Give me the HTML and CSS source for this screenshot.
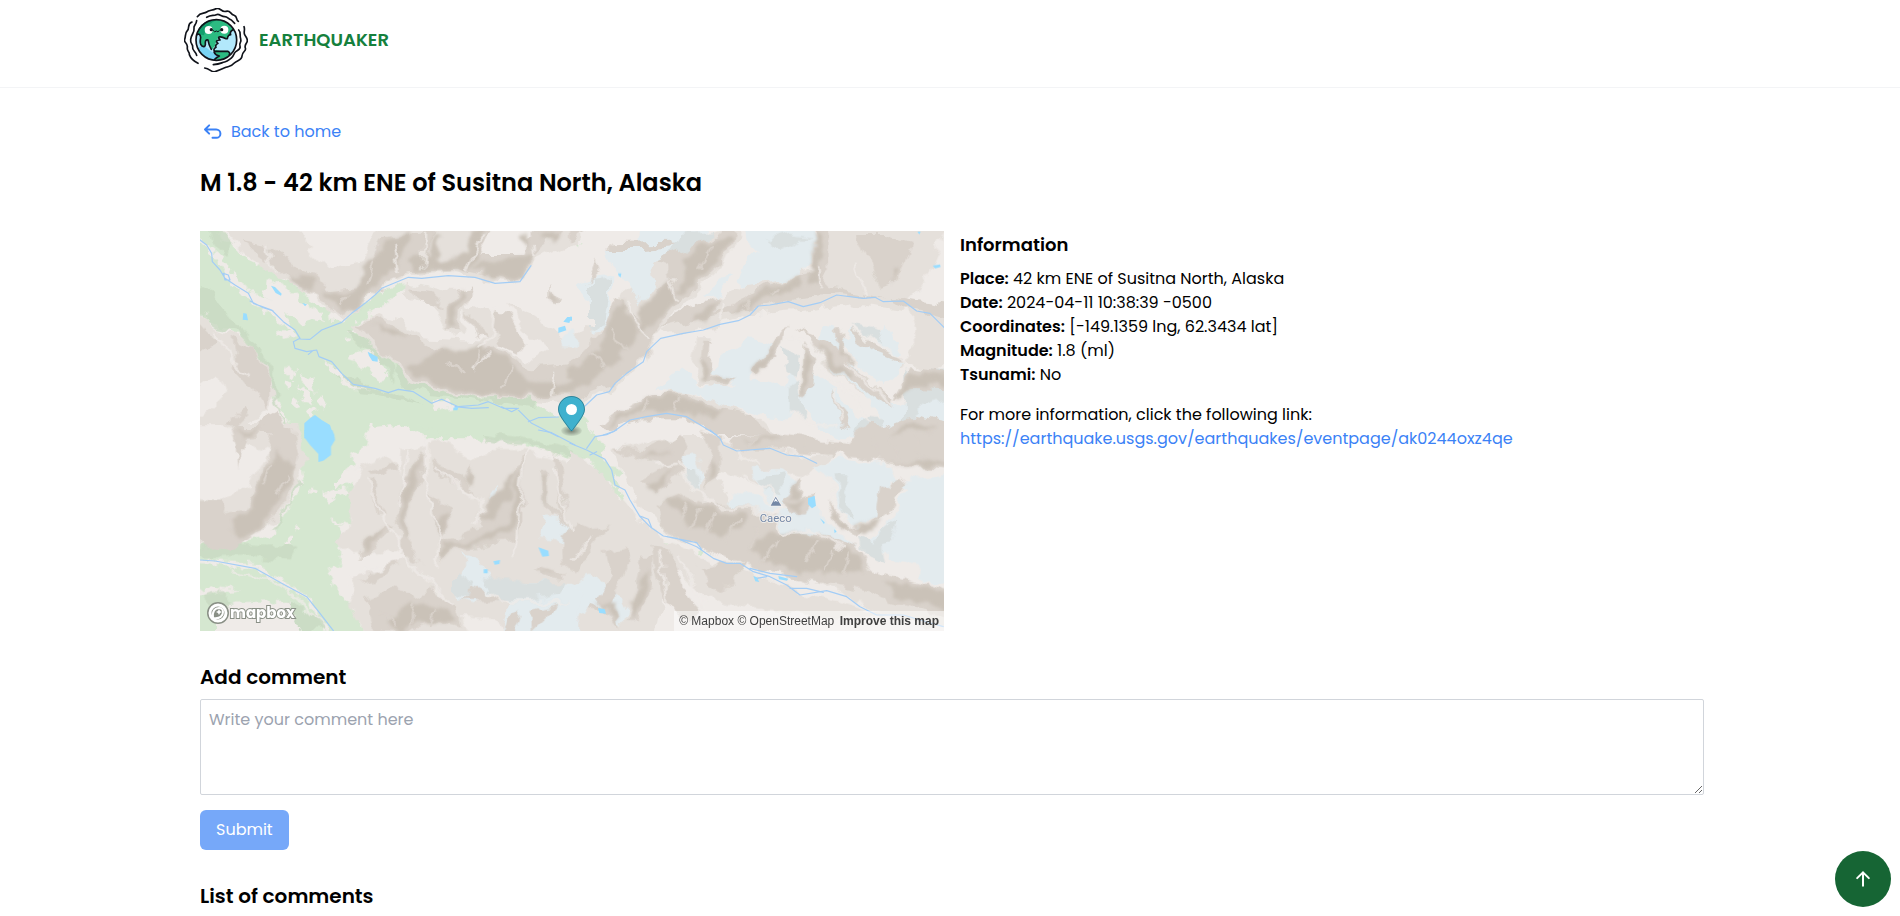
FILE: index.html
```html
<!DOCTYPE html>
<html lang="en">
<head>
<meta charset="utf-8">
<meta name="viewport" content="width=device-width, initial-scale=1">
<title>Earthquaker</title>
<link rel="stylesheet" href="styles.css">
</head>
<body>
<header class="site-header">
  <a class="brand container" href="#">
    <svg class="brand-logo" viewBox="0 0 192 192" aria-hidden="true">
      <circle cx="97" cy="96" r="61" fill="#b2e8fb"/>
      <path d="M38 80Q46 42 84 36Q128 30 146 64Q138 70 140 82Q130 84 128 94Q108 84 104 88Q98 94 100 98Q92 104 96 112Q88 116 86 124Q78 120 74 98Q66 92 64 104Q66 114 56 116Q48 112 50 88Q48 78 38 80Z" fill="#2cbb82"/>
      <path d="M38 80Q46 42 84 36Q92 34 98 36Q66 48 60 82Q50 78 38 80Z" fill="#129e6c"/>
      <path d="M90 128Q96 124 108 128H132Q140 134 136 140Q118 158 92 154Q100 146 108 144Q94 140 90 128Z" fill="#2cbb82"/>
      <path d="M42 126Q58 150 88 154L104 148L88 134L78 128Q62 112 56 118Q46 110 42 126Z" fill="#79d4f4"/>
      <g fill="none" stroke="#10131a" stroke-width="5" stroke-linecap="round" stroke-linejoin="round">
        <circle cx="97" cy="96" r="61"/>
        <path d="M38 80Q48 74 50 88Q46 108 54 114Q66 120 64 104Q64 94 72 96Q74 110 82 124M146 66Q136 72 140 80Q132 80 130 92M126 92Q104 82 104 90L108 96Q90 98 102 106Q92 112 96 118Q86 124 92 130H132Q140 136 136 140M90 132Q94 142 106 144Q98 148 92 154"/>
        <path d="M40 26C50 12 60 18 68 12S84 8 96 2S112 14 126 10S138 18 150 22S154 34 163 40"/>
        <path d="M68 28C82 20 88 24 97 20S112 26 122 26S132 34 142 36L152 46"/>
        <path d="M24 42C8 48 18 60 10 68S6 84 2 94S12 104 10 118S18 130 16 140Q22 156 42 166"/>
        <path d="M38 38C36 54 28 50 30 62S22 78 20 94S28 108 26 118S36 130 38 142"/>
        <path d="M180 56C184 66 178 72 182 80S190 90 190 98S180 110 184 120S174 130 174 144S158 156 150 166S136 174 126 178S110 184 96 190S80 182 62 180"/>
        <path d="M164 66C172 74 166 80 170 92S164 104 168 114S160 126 154 132S150 144 142 150S132 160 122 162S110 168 88 170"/>
      </g>
      <g fill="#fff"><circle cx="74" cy="66" r="12"/><circle cx="121" cy="65" r="12"/></g>
      <g fill="#10131a"><circle cx="82" cy="65" r="5"/><circle cx="113" cy="65" r="5"/></g>
      <path d="M88 68Q92 75 97 69Q102 75 106 68" fill="none" stroke="#10131a" stroke-width="3" stroke-linecap="round"/>
    </svg>
    <span>EARTHQUAKER</span>
  </a>
</header>

<main class="container">
  <a class="back-link" href="#">
    <svg viewBox="0 0 24 24" aria-hidden="true"><path d="M8 4L3 9l5 5M3 9h13.5a4.5 4.5 0 0 1 0 10H12"/></svg>
    Back to home
  </a>
  <h1>M 1.8 - 42 km ENE of Susitna North, Alaska</h1>

  <div class="event">
    <section class="map" aria-label="Map of the epicenter">
      <svg class="terrain" viewBox="0 0 2232 1200" preserveAspectRatio="xMidYMid slice" aria-hidden="true">
        <defs>
          <filter id="rough" color-interpolation-filters="sRGB">
            <feTurbulence type="fractalNoise" baseFrequency=".018" numOctaves="3" seed="4" result="n"/>
            <feDisplacementMap in="SourceGraphic" in2="n" scale="50" xChannelSelector="R" yChannelSelector="G"/>
          </filter>
          <filter id="ragged" color-interpolation-filters="sRGB">
            <feTurbulence type="fractalNoise" baseFrequency=".04" numOctaves="2" seed="9" result="n"/>
            <feDisplacementMap in="SourceGraphic" in2="n" scale="36" xChannelSelector="R" yChannelSelector="G"/>
          </filter>
          <filter id="soft" color-interpolation-filters="sRGB">
            <feTurbulence type="fractalNoise" baseFrequency=".018" numOctaves="3" seed="4" result="n"/>
            <feDisplacementMap in="SourceGraphic" in2="n" scale="50" xChannelSelector="R" yChannelSelector="G"/>
            <feGaussianBlur stdDeviation="4"/>
          </filter>
        </defs>
        <rect width="2232" height="1200" fill="#efebe8"/>

        <!-- forest -->
        <g fill="#d5e7d0" filter="url(#ragged)">
          <path transform="translate(-15 -18)" d="M-20 0H60L80 45L110 60L150 100L215 130L250 150L320 190L345 225L400 255L405 290L440 290L500 240L545 205L630 172L645 190L600 210L570 240L520 270L460 320L520 340L560 370L610 395L625 440L700 455L790 490L850 518L1035 505L1030 545L1090 575L1160 570L1200 640H690L650 610L590 598L530 602L490 640H300L285 595L230 500L190 400L130 320L70 310L-20 250Z"/>
          <path transform="translate(-15 597)" d="M290 -10H520L510 50L465 75L480 100L420 155L440 170L485 160L480 200L470 245L475 285L425 290L440 310L435 370L445 400L400 430L415 470L460 510L490 560L520 640H420L340 500L180 400L-20 385V345L160 330L240 310L290 220L325 150Z"/>
          <path transform="translate(-15 597)" d="M-20 395L180 418L330 505L410 640H-20V500L140 480L60 470L15 475ZM640 -10H1150L1200 100L1140 90L1060 60L1000 45L940 30L860 30L750 5Z"/>
          <path transform="translate(1110 -18)" d="M20 570L50 595L80 645H0ZM575 243h25v5h-25ZM22 52h12v7h-12Z"/>
          <path transform="translate(1110 597)" d="M0 -10H55L75 25L105 40L100 80L120 110L160 120L150 140L130 135L155 190L170 230L125 170L110 150L60 150L75 110L0 60ZM380 362l20 4-4 10-18-4ZM500 420l20 3-3 8-20 2ZM205 355l14 4-4 6-11-2ZM280 347l16 3v6l-14-2Z"/>
        </g>
        <g fill="#c9dac2" opacity=".8" filter="url(#rough)">
          <path transform="translate(-15 -18)" d="M-20 170L60 210L100 280L160 330L230 440L260 560L300 630H285L230 500L190 400L130 320L70 310L-20 250ZM60 0L110 60L100 90L60 60L40 0ZM610 430L700 455L790 490L850 518L1035 507L1025 550L900 535L800 520L700 510L620 480L590 450L590 395L615 400ZM450 320L540 345L580 380L590 480L560 430L520 370L460 335ZM420 430L560 500L600 500L690 540L550 510L470 500Z"/>
          <path transform="translate(-15 597)" d="M-20 355L100 340L210 350L300 345L275 395L160 375L-20 385ZM300 140L285 200L230 310L245 300L310 165ZM270 510L370 560L395 602H310L280 560ZM860 10L960 20L1140 60V90L1050 60L1000 45L870 30ZM925 80l30-6 8 14-30 10-14-6ZM20 490l40-10 50 40-50 20Z"/>
        </g>
        <!-- clearings inside the forest -->
        <g fill="#efebe8" filter="url(#ragged)">
          <path transform="translate(-15 -18)" d="M15 40L45 60L80 90L130 170L200 215L265 255L310 335L285 310L220 265L160 225L100 160L60 100L15 50ZM215 160l45 20 60 50 60 30 10 30-40-10-30 20-50-40-60-40ZM460 385l60-10 40 40 20 50-30 5-30-40-60-20ZM325 445l30 20 10 45-25-15-15-30ZM275 425l25 5-10 30-20-10ZM305 485l40 20 10 35-30-10ZM245 320l50-10 15 20-55 10ZM380 400l50 40 40 40 60 15-60-5-60-45ZM710 535l50-10 25 20-50 15ZM345 550l20 5-10 20-15-5ZM440 340l20-4 10 12-24 6ZM300 520l14 10-4 22-16-8ZM375 520l20 10-6 20-18-6ZM275 470l14 4-6 14-12-4Z"/>
          <path transform="translate(-15 597)" d="M345 175l20 6-2 10-16-4ZM385 190l60-15 20 10-45 15-20 20-10-15ZM420 150l70-40 10 8-60 45-20 10ZM275 318h16v17h-16ZM300 285l14 6-10 10ZM460 440l50-20 80-10-60 40-80 20ZM400 270l60 14 20 6-60-6ZM60 550l60-30 160-5 40 105H60Z"/>
        </g>

        <!-- lower slopes -->
        <g fill="#e5e0db" filter="url(#rough)">
          <path transform="translate(-15 -18)" d="M70 0H300L330 60L400 130L500 110L560 0H870L850 90L1000 100L1015 0H1150V50L1020 110L960 170L860 160L780 145L640 150L550 190L500 235L440 285L330 200L240 150L150 95ZM470 310l70-40 90 20 60 50 180 10 130 60 140-80v210l-150-20-200-10-150-40-80-90ZM640 170l120 30 60 0-20 120-30 20-60-100-80-30ZM810 240l80 30 40 60-20 40-60-30-30-60ZM940 230l120 80 70 40 10 60-80-30-90-90ZM-20 250l85 60 80 30 60 80 30 80-10 60-100 50-145 0 105-100-20-60-60 40Z"/>
          <path transform="translate(1110 -18)" d="M0 340L120 260L170 200L230 110L400 30L520 0L470 110L350 230L260 330L215 410L120 500L0 545V400ZM270 320l130-90 150-60 180-40 10-130 400 0-80 178-60 80-150-20-90 10-220 20-120 40-120 30ZM380 340l40 0-10 90 80 40-20 30-80-20-20-50ZM660 320l60 30 100 50 60 60 110 90-30 10-90-60-90-70-60-80ZM840 320l100 70 70 20-20 30-60-10-80-70ZM90 600l100-70 120-30 150 30 120 60 40 40-160 0-90-50-120 0ZM1010 230l132 60v120l-60 40-80-40 40-60Z"/>
          <path transform="translate(-15 597)" d="M-20 200L60 210L160 170L220 60L120 30L100 -20H300L335 90L300 160L250 270L190 310L90 340L-20 350ZM500 110l70-30 40 40 20 180-30 60-130 10-50-40 60-50-20-80ZM620 60l100-30 120 60 60-30 90 0 150 40v540H960l-60-70-120-10-40-50-80-80-60-100ZM480 440l180-60 60 100 70 60 40 100H520l-60-130Z"/>
          <path transform="translate(1110 597)" d="M0 60L70 110L130 170L200 260L280 330L400 380L560 440L700 490L860 530L960 560H700L560 540L400 500L300 400L250 640H0ZM130 60L330 20L440 20L500 60L560 50L720 80L800 70L700 140L600 120L560 160L420 120L480 220L700 270L860 350L920 440L1142 500V602L930 550L820 490L700 440L550 420L430 360L300 320L220 240L170 150Z"/>
        </g>

        <!-- glaciers -->
        <g fill="#e3ebee" filter="url(#rough)">
          <path transform="translate(1110 -18)" d="M200 0H420L380 60L290 100L240 120L250 190L215 240L180 190L120 110L110 75L200 70ZM15 180L60 160L130 150L120 310L65 320L60 240ZM525 0H735L725 120L690 150L600 170L500 180L520 120L560 80L530 50ZM440 170l40 -8-30 50-60 0ZM540 340l70 20-60 80-40 60-20-40-80-20 60-50ZM250 500L330 440L400 490L520 480L560 460L640 490L660 430L700 500L660 580L560 570L500 550L380 510ZM760 300l40 10 10 70 60 60 90 90 60 20 60-60 60 20V640H800L740 600L690 520L720 440L790 490L850 560L940 610L880 500L800 440L740 370ZM850 310l60 70 90 40-60 60-80-60-40-70ZM940 300l60 80-20 20-60-40Z"/>
          <path transform="translate(1110 597)" d="M480 190l100 10 60 40-120 0-50-20ZM540 120l90 0 60 40-20 70-60-10-30-50ZM620 260l80-60 60 60 60 60 50 40-90-20-60-30-70 20ZM730 110L800 85L940 100L1000 160L1142 130V470L1060 460L1040 400L960 380L900 330L950 280L1010 180L960 150L930 260L860 290L800 240L790 150ZM-20 470l80-30 60 30 50 60-10 60-60-60-60 20L-20 602ZM340 120l50 60 10-30-20-80-50 10Z"/>
          <path transform="translate(-15 597)" d="M880 200l30-40-5 40-25 30ZM1040 255l70 10 30 60 0 50-60-40-50-10ZM780 440l60-60 50 80 150 0 110 20 0 140H920l20-100-50-40-60 40-40-10ZM810 370l30 10-10 30Z"/>
          <path transform="translate(-15 -18)" d="M1105 330l35-20v50l-30-5Z"/>
        </g>
        <g fill="#d9dfdf" filter="url(#rough)">
          <path transform="translate(1110 -18)" d="M330 30L430 20L390 70L290 100L320 60ZM60 170l60-10 0 50-20 90-40 10ZM590 45l70-20 60 10-90 40ZM850 300l40 40 50 20-10-40ZM650 490l40 -20 20 90-20 20-40-30ZM640 370l50 30-10 60-30-30ZM1000 440l142 0v80l-90 30-50 40ZM880 580l60 10-20 40h-60Z"/>
          <path transform="translate(1110 597)" d="M560 140l80-10-10 60-40-10ZM800 130l40 0-20 60 40 80-50-20ZM930 300l50-40-20 80-50 10ZM870 320l60 20 10 60-60-30ZM340 120l40 0 10 60-40-20Z"/>
          <path transform="translate(-15 597)" d="M850 440l150 20 120 0-10 30-100 20-100 0ZM780 430l60 40-20 30-40-10Z"/>
        </g>

        <!-- shaded slopes -->
        <g fill="#d9d2cb" filter="url(#rough)">
          <path transform="translate(-15 -18)" d="M130 45L220 60L300 130L360 150L400 200L480 190L540 100L560 40L720 20L690 110L820 110L870 0H900L860 90L980 90L990 30L1060 0H1110L1010 110L960 165L820 135L640 145L560 180L500 230L440 270L330 195L230 120ZM490 300l60-20 110 50 40 40 80 20 120-20 110 60 130-10v90l-160 5-180-10-140-40-90-80ZM650 190l60 10 30 50-60-20ZM790 200l35-10-30 70-10 60-30-10 5-70ZM820 260l30 30 20 60-30-20ZM900 260l40 10 50 80-20 40-60-30-20-60ZM1060 180l40 40-20 15-20-20ZM-20 260l55 60 40 20-95 70ZM110 340l60 30 50 90 0 100-40-60-60-70ZM190 590l60-30 30 70h-80ZM100 600l60-60 10 20-50 50Z"/>
          <path transform="translate(1110 -18)" d="M0 0H80L0 50ZM120 55l170-5 30 15-100 10-110 0ZM0 410L60 350L100 310L140 220L190 260L215 300L250 200L300 160L290 120L260 110L420 40L500 0L460 110L360 200L310 240L270 300L215 400L110 490L0 530ZM80 100l10 40-40 40ZM270 310l80-60 110-40-30 60 130-80 170-50 10-130 30 0 0 180 180 30-150-10-120 10-130 30-140 30ZM860 30l100 0 60 20-40 120-50 20-30-60ZM400 350l25 0-10 100 80 5-10 20-80 0-15-40ZM655 295l-10 60-80 90-15-10 50-70ZM670 310l110 40 60 70 130 100-10 30-120-90-80-60-40-60ZM850 310l60 60 90 30-10 15-80-30-60-50ZM800 310l20 0 10 80 20 30-40-20ZM90 600l60-50 100-40 90 0 110 40 90 20 60 60h-150l-110-50-120 0-100 30ZM700 350l40 60-10 70-30 30 0-90ZM960 210l180 30v50l-80-20-90-40ZM1020 430l122 20v40l-120-5-50 40ZM930 610l100-40 110 20v50H920ZM780 500l40 50 30 60-40-10Z"/>
          <path transform="translate(-15 597)" d="M-20 210L70 210L100 250L160 240L190 150L220 70L240 -10H290L310 70L290 150L260 230L210 290L130 350L40 360L-20 300ZM110 -10H210L200 15L150 20L140 80L130 120L125 40ZM520 120l70-10 20 15-80 10ZM520 150l20 0 35 110-20 0ZM480 380l50-60 50-40 20 10-40 40-60 50ZM615 370L610 200L640 130L680 60L685 150L640 220L635 330L680 400ZM700 80l80 40 60 80-50-30-70-40ZM710 200l50 40-10 60-10 30-20-40ZM800 140l30-40-10 70ZM730 340L860 290L860 240L930 180L985 70V290L960 330L850 350L760 360L740 400ZM1040 110l15 0 0 100 60 60-50-20-30-50ZM1075 70l30 40 20 190-20-40ZM500 460l50-40 60-20-60 50ZM510 510l80-30 70 20 50-20 70 60 20 50-100-20-60 30H540ZM1010 410l110 20v20l-80-10ZM790 510l60-40 80 40-90 0ZM1010 540l80-20-60 60-20 20ZM940 560l40-20-30 82h-30Z"/>
          <path transform="translate(1110 597)" d="M130 55L230 60L330 10L350 60L330 130L260 190L210 150L280 110L200 90ZM390 0l60 20 0 100-40 60-10-40 20-40-10-60ZM470 20L640 10L830 40L900 -10L1142 0V115L960 100L860 80L720 70L600 60L480 55ZM260 230L350 190L420 220L600 240L640 310L760 310L860 350L900 420L1142 490V560L980 520L840 470L700 450L540 410L440 370L330 320L270 290ZM640 200l50-60 0 60 50-10-30 60-60 0ZM770 210l60 80 60 0 70-50 50-80-20-20-60 40-10 80-60 60-60-40ZM-25 320L20 275L70 300L120 290L60 360L15 430L-20 400ZM110 370l60-20 10 40-40 100-30 60-30-50 50-60ZM210 380l40 0-10 110-40 80-30 0 20-70ZM240 350l60 10 40 120 50 50-30 50-80-70ZM380 420l60-20 80 0-30 60-60 20ZM60 520l80 20 20 60-40-50-60-10Z"/>
        </g>
        <g fill="#cac2b8" filter="url(#soft)">
          <path transform="translate(-15 -18)" d="M270 160l60-10 40 30-30 15ZM390 210L470 200L500 130L550 90L580 40L650 18L600 130L540 180L490 235L450 260ZM640 110l60-20 20-60 20 0-20 70 90-10 30-80 30-5-20 100-40 30-150 5ZM830 120l100-10 70-20 15 15-50 50-80 0ZM970 30l30-15-10 50ZM1040 30l60-15-20 30ZM525 305l60 0 60 20-60 0ZM640 430l120-60 100-5 80 40 50 70 150 0v35l-260 0-150-30ZM765 240l35-45-25 110-10 0ZM1065 190l25 35-25-5Z"/>
          <path transform="translate(1110 -18)" d="M0 435L90 370L100 320L160 230L200 330L220 240L300 160L320 220L280 270L200 330L150 400L60 480L0 505ZM320 210L350 130L350 90L390 60L440 40L480 40L460 90L400 150ZM480 270L550 210L690 150L700 180L600 215ZM730 30l18-5-3 150-30 0 10-40ZM390 260l60-40-30 60-60 10ZM550 430l95-105-65 105-20 15ZM390 400l15 0 5 70-15 0ZM430 455h55v12h-55ZM110 605L160 555L250 515L340 515L400 540L480 560L420 575L330 560L200 560ZM705 380l25 30-25 95-5-30ZM810 320l10 60 30 30-35-15ZM740 360l60 50 60 50-20 0-60-40ZM980 520l40-75 120 10v20l-110 5ZM970 620l60-40 60 30ZM970 130l15 0-15 50Z"/>
          <path transform="translate(-15 597)" d="M110 290L170 240L200 130L250 60L300 110L260 190L220 260L180 310L130 320ZM120 0H200L150 15ZM500 360l30-40 50-35-40 50ZM622 320L625 180L675 75L670 160L640 210L632 330ZM730 370L750 345L850 330L940 280L960 170L985 90L975 250L950 310L850 340L760 360L740 395ZM850 260l50-60 70-90-30 100-60 50ZM1040 130h10v90l-10-20ZM725 290l25-40 5 30-15 30ZM800 150l25-30 0 50ZM580 580l70-60 100 20 30 35-130 0-40 25ZM1015 420l80 10-40 0Z"/>
          <path transform="translate(1110 597)" d="M200 90L310 60L240 90ZM230 180L320 100L260 190ZM300 210l60-5 90 40 80 5-30 50-60 10-90-30ZM540 350L600 300L700 310L840 350L860 380L880 430L780 430L620 410ZM940 450l60 10 140 40v30l-140-20ZM650 200l30-50 5 50ZM640 220l70-10-30 40ZM425 100l20 10-35 60ZM520 30l120-10-40 20ZM850 290l50-10 40-20-50 50ZM960 100l180-10v15h-150ZM180 510l60-90-20 90-40 60ZM80 515l60 15 10 50-30-40ZM780 230l30 40 30 25-30-5Z"/>
        </g>

        <!-- ridges -->
        <g fill="none" stroke="#efebe8" stroke-width="8" stroke-linecap="round" stroke-linejoin="round" opacity=".75" filter="url(#rough)">
          <path transform="translate(-15 -18)" d="M690 30L685 130M870 40L815 130M595 60L605 140M1015 60L1018 100M770 145L700 150M900 250L885 350L850 370M880 385L830 440M1080 440L1070 510M60 320L110 410L170 440M220 60L235 130"/>
          <path transform="translate(1110 -18)" d="M180 230L195 300L235 340M300 165L320 220M470 225L455 290M665 340L740 390L780 460L850 510L900 600M830 420L920 490L960 540M890 340L1000 405L1010 440M790 500L810 580M660 560L720 600L800 605M745 130L750 180M860 120L890 210"/>
          <path transform="translate(-15 597)" d="M520 150L570 270L600 320L620 370L690 440L770 530M690 30L690 160L740 320L720 400M720 110L800 180L860 220L845 280M990 60L970 300L960 380M1080 120L1110 230L1130 300M120 420L270 470L340 540L400 600M640 60L610 230M880 480L930 515L1120 515"/>
          <path transform="translate(1110 597)" d="M330 90L350 160L400 190L440 230L600 240L640 310L720 300L820 345M320 95L250 110M520 140L610 180L620 210M790 160L785 220L840 290M330 380L380 490L400 520M270 370L290 520M500 60L560 110M0 380L60 330"/>
        </g>
        <!-- gullies on the long southern faces -->
        <g fill="none" stroke="#d9d2cb" stroke-width="7" stroke-linecap="round" filter="url(#rough)">
          <path transform="translate(1110 597)" d="M350 215L330 270M390 235L360 290M440 255L410 320M500 270L470 330M560 290L540 350M620 330L590 390M740 330L710 400M790 350L760 420M840 370L820 440M560 20L540 50M700 20L690 60M800 50L780 80M900 20L930 80M960 20L990 90M1030 20L1050 90"/>
          <path transform="translate(1110 -18)" d="M60 390L110 430M130 320L170 380M420 60L390 130M240 530L220 560M330 520L320 555M620 190L590 215M540 220L520 250"/>
          <path transform="translate(-15 -18)" d="M860 380L840 430M760 400L800 450M950 430L930 490M540 110L520 170M460 210L440 240"/>
          <path transform="translate(-15 597)" d="M230 100L210 160M270 130L240 200M660 520L650 590M720 540L700 580M560 550L600 580"/>
        </g>

        <!-- rivers -->
        <g fill="none" stroke="#a3cdf6" stroke-width="3.5" stroke-linejoin="round" stroke-linecap="round">
          <path transform="translate(-15 -18)" d="M15 45L35 60L50 85L52 110L75 135L90 160L120 180L160 205L175 235L230 255L265 290L300 315L315 340L295 350L300 370L335 380L365 375L372 395L410 410L440 445L475 478L540 490L580 503L610 493L655 500L710 535L740 523L790 545L850 540L880 530L925 550L965 550L1010 595L1060 620L1090 635M315 342L345 343L380 315L440 292L470 265L510 235L540 210L560 190L640 157L680 160L760 152L840 157L900 175L975 170L1008 122M85 145l15 5 5 15-15 0-5-20M165 228l40 20 30 10M340 388l15-12M780 545l50 5 50-2M920 545l30 15 20-10M1000 590l30-12 60-2"/>
          <path transform="translate(1110 -18)" d="M45 543L80 510L118 500L135 475L170 445L220 410L230 380L272 340L340 325L400 315L450 298L505 287L540 270L565 243L600 240L655 230L700 245L750 233L800 210L880 220L915 217L940 230L1000 228L1040 258L1080 265L1110 295L1125 310M100 630L130 620L180 585L230 575L290 565L350 575L400 605L440 630"/>
          <path transform="translate(-15 597)" d="M15 390L60 393L180 415L260 460L335 500L375 550L415 602M1030 0L1070 8L1140 45"/>
          <path transform="translate(1110 597)" d="M0 40L50 60L105 88L125 120L135 165L165 180L180 210L210 260L240 290L280 318L320 325L380 350L430 385L470 400L510 400L550 425L600 440L650 465L690 495L770 482L830 500L870 530L920 555L1000 555L1050 570L1120 590M50 55L75 20L110 14L140 0M420 0L450 25L460 45L500 63L600 55L650 75L700 80L740 100M60 75l20-10M210 258l25 10 10 25M290 320l90 18 15 20M540 415l60 15 80 10M560 445l30-5M660 475l50 0 50 12"/>
        </g>
        <!-- lakes -->
        <g fill="#99ddff">
          <path transform="translate(-15 -18)" d="M328 595L345 580L360 570L380 585L405 600L418 640H328ZM228 182l12 4 20 20-2 6-16-8ZM145 264l10 2 4 20-16-2ZM518 380l14 8 16 8v14l-16-2-10-16ZM322 234l14 4-6 6ZM1090 308l20-6 4 14-24 8ZM1105 290l12-14 12 0-6 18ZM775 548l16-4-4 12-12 0Z"/>
          <path transform="translate(-15 597)" d="M328 0H412L418 15L420 30L408 50V75L385 92L370 96V72L345 45L330 25ZM1030 352l30 10 2 16-20 2ZM895 394l20-4-2 12-14 2ZM866 418l12 0 0 12-12 0Z"/>
          <path transform="translate(1110 -18)" d="M144 145l10 0-2 12-6-4ZM1042 20l10 0-4 8ZM1088 122l22-4 2 8-16 4ZM0 275h6v12H0Z"/>
          <path transform="translate(1110 597)" d="M714 205l20-8 4 30-12 8-12-12ZM750 265l14 12-2 6ZM792 298l8 6-6 6ZM84 535l20 2 4 14-20-2ZM550 438l10 4 8 14-12-2ZM625 438l30 8-4 6-24-4Z"/>
        </g>

        <g transform="translate(1110 597)">
          <path d="M617 200L634 227H602Z" fill="#7488a6" stroke="#f3f1ef" stroke-width="5" paint-order="stroke"/>
          <path d="M617 205L624 216L617 213L611 216Z" fill="#fff"/>
          <text class="peak" x="617" y="277">Caeco</text>
        </g>
      </svg>

      <svg class="marker" viewBox="0 0 27 41" aria-hidden="true">
        <defs><radialGradient id="shade"><stop offset="10%" stop-opacity=".4"/><stop offset="100%" stop-opacity=".05"/></radialGradient></defs>
        <ellipse cx="13.5" cy="34.8" rx="10.5" ry="5.25" fill="url(#shade)"/>
        <path d="M27 13.5C27 19.07 20.25 27 14.75 34.5C14.02 35.5 12.98 35.5 12.25 34.5C6.75 27 0 19.22 0 13.5C0 6.04 6.04 0 13.5 0C20.96 0 27 6.04 27 13.5Z" fill="#3fb1ce"/>
        <path d="M26.5 13.5C26.5 18.8 19.8 26.8 14.3 34.2C13.8 34.9 13.2 34.9 12.7 34.2C7.2 26.8 .5 19 .5 13.5C.5 6.3 6.3 .5 13.5 .5C20.7 .5 26.5 6.3 26.5 13.5Z" fill="none" stroke="#000" stroke-opacity=".25"/>
        <circle cx="13.5" cy="13.5" r="5.5" fill="#fff"/>
      </svg>

      <a class="mapbox" href="#" aria-label="Mapbox homepage">
        <svg viewBox="0 0 96 23" aria-hidden="true">
          <circle cx="11" cy="11" r="9" fill="none" stroke="#8a9086" stroke-width="4"/>
          <circle cx="11" cy="11" r="8" fill="#8a9086" stroke="#fff" stroke-width="3"/>
          <path d="M6 16C5 9 8 6 12 6A4 4 0 0 1 16 10C16 14 13 17 6 16Z" fill="#8a9086" stroke="#fff" stroke-width="2"/>
          <path d="M12 7L13 9L15 10L13 11L12 13L11 11L9 10L11 9Z" fill="#fff"/>
          <text class="wordmark" x="23" y="16">mapbox</text>
        </svg>
      </a>
      <div class="attribution">
        <a href="#">© Mapbox</a> <a href="#">© OpenStreetMap</a> <a class="improve" href="#">Improve this map</a>
      </div>
    </section>

    <section class="info">
      <h2>Information</h2>
      <p><strong>Place:</strong> 42 km ENE of Susitna North, Alaska</p>
      <p><strong>Date:</strong> 2024-04-11 10:38:39 -0500</p>
      <p><strong>Coordinates:</strong> [-149.1359 lng, 62.3434 lat]</p>
      <p><strong>Magnitude:</strong> 1.8 (ml)</p>
      <p><strong>Tsunami:</strong> No</p>
      <p class="more">For more information, click the following link:<br>
        <a href="#">https://earthquake.usgs.gov/earthquakes/eventpage/ak0244oxz4qe</a></p>
    </section>
  </div>

  <form class="comment-form">
    <label class="section-title" for="comment">Add comment</label>
    <textarea id="comment" placeholder="Write your comment here"></textarea>
    <button class="submit" type="button">Submit</button>
  </form>
  <h2 class="section-title">List of comments</h2>
</main>

<button class="to-top" type="button" aria-label="Back to top">
  <svg viewBox="0 0 24 24" aria-hidden="true"><path d="M12 20V4M5 11l7-7 7 7"/></svg>
</button>
</body>
</html>
```
FILE: styles.css
```css
* { box-sizing: border-box; margin: 0; }

body {
  font-family: Poppins, Inter, "Open Sans", sans-serif;
  font-size: 16px;
  line-height: 24px;
  color: #000;
  background: #fff;
  overflow: hidden;
}

a { color: #3b82f6; text-decoration: none; }
h1, h2, strong { font-weight: 600; }

.container {
  max-width: 1540px;
  margin: 0 auto;
  padding: 0 16px 0 20px;
}

.site-header {
  padding: 8px 0 15px;
  border-bottom: 1px solid #f3f4f6;
}

.brand {
  display: flex;
  align-items: center;
  gap: 11px;
  padding: 0 4px;
  font-size: 18px;
  font-weight: 600;
  color: #15803d;
}

.brand-logo { width: 64px; height: 64px; }
.brand span { padding-bottom: 1px; }

.back-link {
  display: flex;
  align-items: center;
  gap: 8px;
  width: max-content;
  margin-top: 32px;
  padding-left: 2px;
}

.back-link svg { width: 21px; height: 20px; }

.back-link path, .to-top path {
  fill: none;
  stroke: currentColor;
  stroke-width: 2.4;
  stroke-linecap: round;
  stroke-linejoin: round;
}

h1 {
  margin: 23px 0 32px;
  font-size: 24px;
  line-height: 32px;
}

.event {
  display: grid;
  grid-template-columns: 1fr 1fr;
  gap: 16px;
}

.map {
  position: relative;
  height: 400px;
  overflow: hidden;
}

.terrain { display: block; width: 100%; height: 100%; }

.peak {
  font: 34px Roboto, sans-serif;
  text-anchor: middle;
  fill: #7488a6;
  stroke: #f3f1ef;
  stroke-width: 5px;
  paint-order: stroke;
}

.marker {
  position: absolute;
  top: 165px;
  left: 50%;
  width: 27px;
  height: 41px;
  margin-left: -14px;
}

.mapbox {
  position: absolute;
  left: 7px;
  bottom: 6px;
}

.mapbox svg { display: block; width: 96px; height: 23px; }

.wordmark {
  font: 700 15px Poppins, Lato, sans-serif;
  fill: #fff;
  stroke: #8a9086;
  stroke-width: 2px;
  paint-order: stroke;
}

.attribution {
  position: absolute;
  right: 0;
  bottom: 0;
  padding: 0 5px;
  font: 12px/20px "Liberation Sans", Arial, sans-serif;
  background: rgba(255, 255, 255, 0.5);
}

.attribution a { color: #404040; }
.attribution .improve { margin-left: 2px; font-weight: 700; }

.info h2 {
  margin-bottom: 8px;
  font-size: 18px;
  line-height: 28px;
}

.more { margin-top: 16px; }

.comment-form {
  display: flex;
  flex-direction: column;
  align-items: flex-start;
  margin: 32px 0;
}

.section-title {
  font-size: 20px;
  font-weight: 600;
  line-height: 28px;
}

textarea {
  width: 100%;
  height: 96px;
  margin: 8px 0 15px;
  padding: 8px;
  border: 1px solid #d1d5db;
  border-radius: 2px;
  font: inherit;
  resize: vertical;
}

textarea::placeholder { color: #9ca3af; }

.submit {
  height: 40px;
  padding: 0 16px;
  border: 0;
  border-radius: 6px;
  font: inherit;
  color: #fff;
  background: #76a8f9;
}

.to-top {
  position: fixed;
  right: 9px;
  bottom: 9px;
  display: grid;
  place-items: center;
  width: 56px;
  height: 56px;
  padding: 0;
  border: 0;
  border-radius: 50%;
  color: #fff;
  background: #166534;
}

.to-top svg { width: 20px; height: 20px; }
```
